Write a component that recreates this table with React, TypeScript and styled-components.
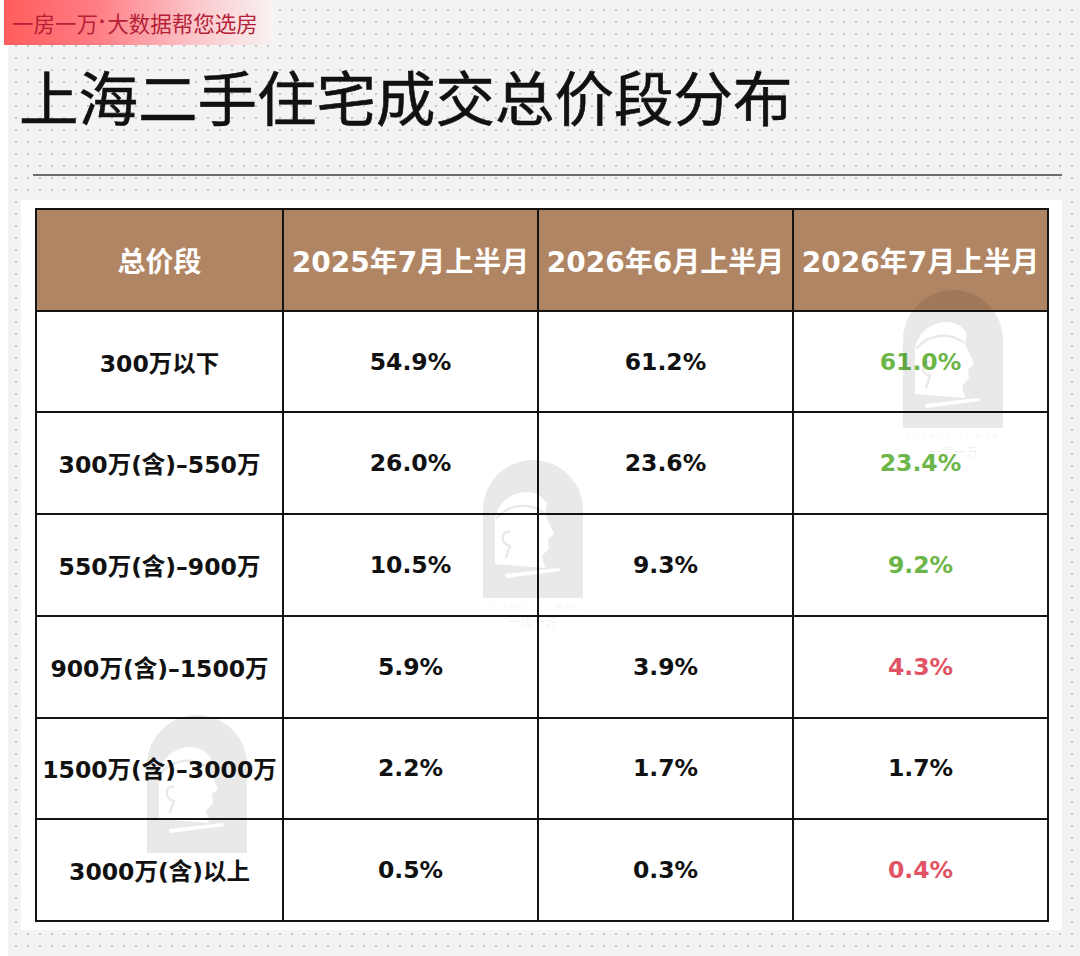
import React from 'react';
import styled, { createGlobalStyle } from 'styled-components';

const Global = createGlobalStyle`
  html, body { margin: 0; padding: 0; background: #fff; }
  body { font-family: "Liberation Sans", "Noto Sans CJK SC", sans-serif; }
`;

const Page = styled.div`
  width: 1080px;
  height: 956px;
  background: #fff;
  overflow: hidden;
`;

const Panel = styled.div`
  margin-left: 8px;
  height: 956px;
  background-color: #f3f3f3;
  background-image: radial-gradient(circle, #c6c6c6 0.9px, transparent 1.4px);
  background-size: 12px 12px;
  background-position: 2px 4px;
  display: flex;
  flex-direction: column;
`;

const Banner = styled.div`
  margin-left: -4px;
  width: 272px;
  height: 45px;
  box-sizing: border-box;
  padding-left: 8px;
  display: flex;
  align-items: center;
  background: linear-gradient(90deg, #ff5c5c 0%, #ff7f86 35%, #fbc9cd 72%, rgba(248, 244, 244, 0.9) 100%);
  color: #b51f38;
  font-family: "Noto Sans CJK SC", sans-serif;
  font-size: 21.5px;
`;

const Dot = styled.span`
  font-family: "Liberation Sans", sans-serif;
  font-weight: 700;
  padding: 0 1px;
`;

const Title = styled.h1`
  margin: 15px 0 0 0;
  padding-left: 11px;
  font-family: "Noto Sans CJK SC", sans-serif;
  font-weight: 400;
  font-size: 59.5px;
  line-height: 70px;
  color: #111;
  -webkit-text-stroke: 0.6px #111;
`;

const Divider = styled.div`
  margin: 44px 18px 0 25px;
  height: 2px;
  background: #6d6d6d;
`;

const Card = styled.div`
  position: relative;
  margin: 24px 18px 0 13px;
  background: #fff;
  padding: 8px 13px 8px 14px;
`;

const Grid = styled.div`
  display: grid;
  grid-template-columns: 245px 253px 253px 253px;
  grid-template-rows: repeat(7, 1fr);
  gap: 2px;
  padding: 2px;
  height: 714px;
  box-sizing: border-box;
  background: #141414;
`;

const Cell = styled.div<{ $head?: boolean; $color?: string }>`
  display: flex;
  align-items: center;
  justify-content: center;
  background: ${(p) => (p.$head ? '#b08563' : '#fff')};
  color: ${(p) => (p.$head ? '#fff' : p.$color || '#111')};
  font-family: "DejaVu Sans", "Noto Sans CJK SC", sans-serif;
  font-weight: 700;
  font-size: ${(p) => (p.$head ? '28px' : '23.5px')};
  white-space: nowrap;
`;

const Mark = styled.svg`
  position: absolute;
  width: 100px;
  height: 170px;
  pointer-events: none;
`;

const GREEN = '#6cb649';
const RED = '#e05466';

const header = ['总价段', '2025年7月上半月', '2026年6月上半月', '2026年7月上半月'];
const rows: { label: string; a: string; b: string; c: string; cc?: string }[] = [
  { label: '300万以下', a: '54.9%', b: '61.2%', c: '61.0%', cc: GREEN },
  { label: '300万(含)–550万', a: '26.0%', b: '23.6%', c: '23.4%', cc: GREEN },
  { label: '550万(含)–900万', a: '10.5%', b: '9.3%', c: '9.2%', cc: GREEN },
  { label: '900万(含)–1500万', a: '5.9%', b: '3.9%', c: '4.3%', cc: RED },
  { label: '1500万(含)–3000万', a: '2.2%', b: '1.7%', c: '1.7%' },
  { label: '3000万(含)以上', a: '0.5%', b: '0.3%', c: '0.4%', cc: RED },
];

const Watermark: React.FC<{ left: number; top: number }> = ({ left, top }) => (
  <Mark viewBox="0 0 100 170" style={{ left, top }}>
    <path
      fillRule="evenodd"
      fill="rgba(0,0,0,0.085)"
      d="M0 138 V50 A50 50 0 0 1 100 50 V138 Z
         M12 60 C15 32 52 22 64 44 L62 54 L71 74 L65 79 L66 88 L59 96 L62 108 L12 104 Z
         M22 114 L76 108 L77 111 L23 118 Z"
    />
    <path
      fill="none"
      stroke="rgba(0,0,0,0.085)"
      strokeWidth="2.5"
      strokeLinecap="round"
      d="M14 58 C26 44 46 42 60 52 M26 72 C18 70 17 84 27 86 M27 86 L23 97"
    />
    <text
      x="50"
      y="149"
      textAnchor="middle"
      fontSize="7.5"
      letterSpacing="2.6"
      fill="rgba(0,0,0,0.07)"
      fontFamily="DejaVu Sans, sans-serif"
    >
      YI FANG YI WAN
    </text>
    <text
      x="50"
      y="167"
      textAnchor="middle"
      fontSize="12.5"
      fill="rgba(0,0,0,0.07)"
      fontFamily="Noto Sans CJK SC, sans-serif"
    >
      一房一万
    </text>
  </Mark>
);

export default function App() {
  return (
    <Page>
      <Global />
      <Panel>
        <Banner>
          一房一万<Dot>·</Dot>大数据帮您选房
        </Banner>
        <Title>上海二手住宅成交总价段分布</Title>
        <Divider />
        <Card>
          <Grid>
            {header.map((h) => (
              <Cell key={h} $head>
                {h}
              </Cell>
            ))}
            {rows.map((r) => (
              <React.Fragment key={r.label}>
                <Cell>{r.label}</Cell>
                <Cell>{r.a}</Cell>
                <Cell>{r.b}</Cell>
                <Cell $color={r.cc}>{r.c}</Cell>
              </React.Fragment>
            ))}
          </Grid>
          <Watermark left={882} top={90} />
          <Watermark left={462} top={260} />
          <Watermark left={126} top={515} />
        </Card>
      </Panel>
    </Page>
  );
}
